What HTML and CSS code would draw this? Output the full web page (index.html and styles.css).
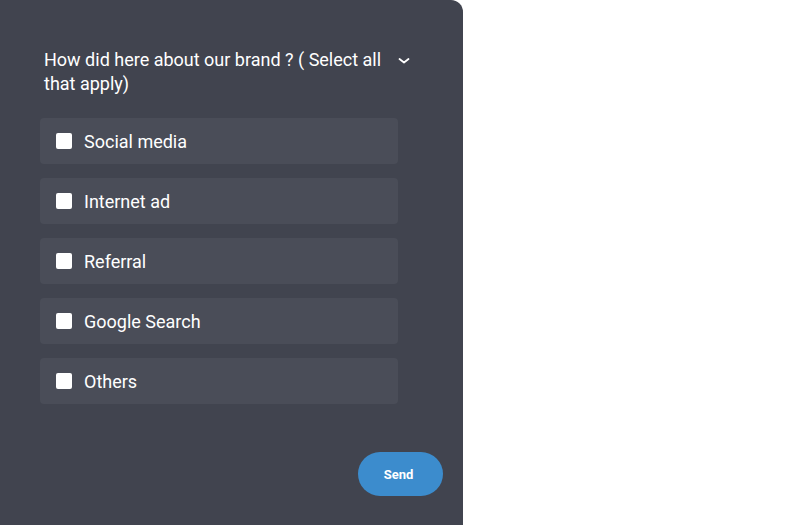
FILE: index.html
```html
<!DOCTYPE html>
<html>
<head>
<meta charset="utf-8">
<link rel="stylesheet" href="styles.css">
</head>
<body>
<div class="panel">
  <div class="question">
    <div class="q-text">How did here about our brand ? ( Select all that apply)</div>
    <svg class="chev" width="12" height="8" viewBox="0 0 12 8"><path d="M1.5 2 L6 5.5 L10.5 2" fill="none" stroke="#fff" stroke-width="1.8" stroke-linecap="round" stroke-linejoin="round"/></svg>
  </div>
  <div class="options">
    <label class="option"><span class="box"></span><span>Social media</span></label>
    <label class="option"><span class="box"></span><span>Internet ad</span></label>
    <label class="option"><span class="box"></span><span>Referral</span></label>
    <label class="option"><span class="box"></span><span>Google Search</span></label>
    <label class="option"><span class="box"></span><span>Others</span></label>
  </div>
  <div class="actions">
    <button class="send">Send</button>
  </div>
</div>
</body>
</html>
```
FILE: styles.css
```css
html, body {
  margin: 0;
  padding: 0;
  background: #ffffff;
}
body {
  font-family: Roboto, "Liberation Sans", sans-serif;
}
.panel {
  width: 463px;
  height: 525px;
  box-sizing: border-box;
  background: #41444f;
  border-top-right-radius: 12px;
  padding: 48px 20px 0 40px;
  display: flex;
  flex-direction: column;
}
.question {
  display: flex;
  align-items: flex-start;
  padding-left: 4px;
  width: 370px;
  color: #ffffff;
}
.q-text {
  width: 342px;
  font-size: 18px;
  line-height: 24px;
}
.chev {
  margin-left: 12px;
  margin-top: 9px;
}
.options {
  margin-top: 22px;
  display: flex;
  flex-direction: column;
  gap: 14px;
  width: 358px;
}
.option {
  height: 46px;
  background: #4a4d58;
  border-radius: 4px;
  display: flex;
  align-items: center;
  padding-left: 16px;
  color: #ffffff;
  font-size: 18px;
}
.box {
  width: 16px;
  height: 16px;
  background: #ffffff;
  border-radius: 2px;
  margin-right: 12px;
}
.actions {
  display: flex;
  justify-content: flex-end;
  margin-top: 48px;
}
.send {
  width: 85px;
  height: 44px;
  border: none;
  border-radius: 22px;
  background: #3c8ccd;
  color: #ffffff;
  font-family: Roboto, "Liberation Sans", sans-serif;
  font-weight: 700;
  font-size: 13px;
  padding: 0 4px 0 0;
}
```
